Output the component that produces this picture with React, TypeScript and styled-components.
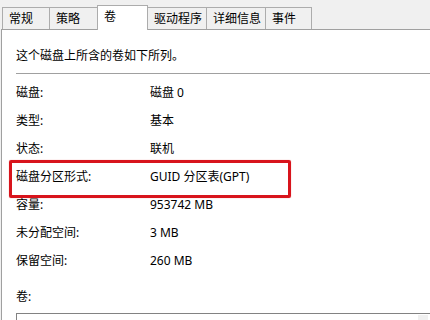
import React from 'react';
import styled, { createGlobalStyle } from 'styled-components';

const Global = createGlobalStyle`
  html, body { margin: 0; padding: 0; background: #f0f0f0; }
  body {
    font-family: "Noto Sans", "Noto Sans CJK SC", sans-serif;
    font-size: 12px;
    color: #000;
  }
`;

const Window = styled.div`
  width: 430px;
  height: 320px;
  overflow: hidden;
  display: flex;
  flex-direction: column;
`;

const TabStrip = styled.div`
  display: flex;
  flex-shrink: 0;
  align-items: flex-end;
  height: 29px;
  padding-left: 2px;
  box-sizing: border-box;
`;

const Tab = styled.div<{ $w: number; $active?: boolean }>`
  box-sizing: border-box;
  width: ${(p) => p.$w}px;
  height: ${(p) => (p.$active ? 25 : 22)}px;
  margin-bottom: ${(p) => (p.$active ? -1 : 0)}px;
  margin-left: -1px;
  &:first-child { margin-left: 0; }
  border: 1px solid #acacac;
  border-bottom: none;
  background: ${(p) => (p.$active ? '#ffffff' : '#f0f0f0')};
  position: relative;
  z-index: ${(p) => (p.$active ? 2 : 1)};
  display: flex;
  align-items: center;
  padding: 0 0 ${(p) => (p.$active ? 3 : 0)}px 6px;
  white-space: nowrap;
  line-height: 16px;
`;

const Panel = styled.div`
  flex: 1;
  min-height: 0;
  background: #ffffff;
  border-top: 1px solid #a0a0a0;
  border-left: 1px solid #a0a0a0;
  margin-left: 1px;
  padding: 18px 0 0 14px;
  display: flex;
  flex-direction: column;
`;

const Intro = styled.div`
  line-height: 16px;
  flex-shrink: 0;
`;

const Separator = styled.div`
  height: 1px;
  flex-shrink: 0;
  background: #a0a0a0;
  margin-top: 9px;
`;

const Rows = styled.div`
  margin-top: 5px;
  flex-shrink: 0;
  display: flex;
  flex-direction: column;
`;

const Row = styled.div`
  position: relative;
  display: grid;
  grid-template-columns: 134px 1fr;
  height: 28px;
  align-items: center;
  line-height: 16px;
`;

const Highlight = styled.div`
  position: absolute;
  left: -7px;
  top: -3px;
  width: 282px;
  height: 38px;
  box-sizing: border-box;
  border: 3px solid #d8141c;
  border-radius: 2px;
  box-shadow: 0 0 1px rgba(216, 20, 28, 0.6);
  pointer-events: none;
`;

const ListLabel = styled.div`
  margin-top: 14px;
  flex-shrink: 0;
  line-height: 16px;
`;

const ListBox = styled.div`
  margin-top: 8px;
  flex-shrink: 0;
  height: 20px;
  border: 1px solid #828282;
  border-right: none;
  background: #fff;
  position: relative;
`;

const ScrollCorner = styled.div`
  position: absolute;
  right: 2px;
  top: 1px;
  width: 10px;
  height: 12px;
  background: #f0f0f0;
`;

const tabs = [
  { label: '常规', w: 48 },
  { label: '策略', w: 49 },
  { label: '卷', w: 51, active: true },
  { label: '驱动程序', w: 60 },
  { label: '详细信息', w: 60 },
  { label: '事件', w: 47 },
];

const rows: { label: string; value: string; highlight?: boolean }[] = [
  { label: '磁盘:', value: '磁盘 0' },
  { label: '类型:', value: '基本' },
  { label: '状态:', value: '联机' },
  { label: '磁盘分区形式:', value: 'GUID 分区表(GPT)', highlight: true },
  { label: '容量:', value: '953742 MB' },
  { label: '未分配空间:', value: '3 MB' },
  { label: '保留空间:', value: '260 MB' },
];

export default function App() {
  return (
    <>
      <Global />
      <Window>
        <TabStrip>
          {tabs.map((t) => (
            <Tab key={t.label} $w={t.w} $active={t.active}>
              {t.label}
            </Tab>
          ))}
        </TabStrip>
        <Panel>
          <Intro>这个磁盘上所含的卷如下所列。</Intro>
          <Separator />
          <Rows>
            {rows.map((r) => (
              <Row key={r.label}>
                <span>{r.label}</span>
                <span>{r.value}</span>
                {r.highlight && <Highlight />}
              </Row>
            ))}
          </Rows>
          <ListLabel>卷:</ListLabel>
          <ListBox>
            <ScrollCorner />
          </ListBox>
        </Panel>
      </Window>
    </>
  );
}
